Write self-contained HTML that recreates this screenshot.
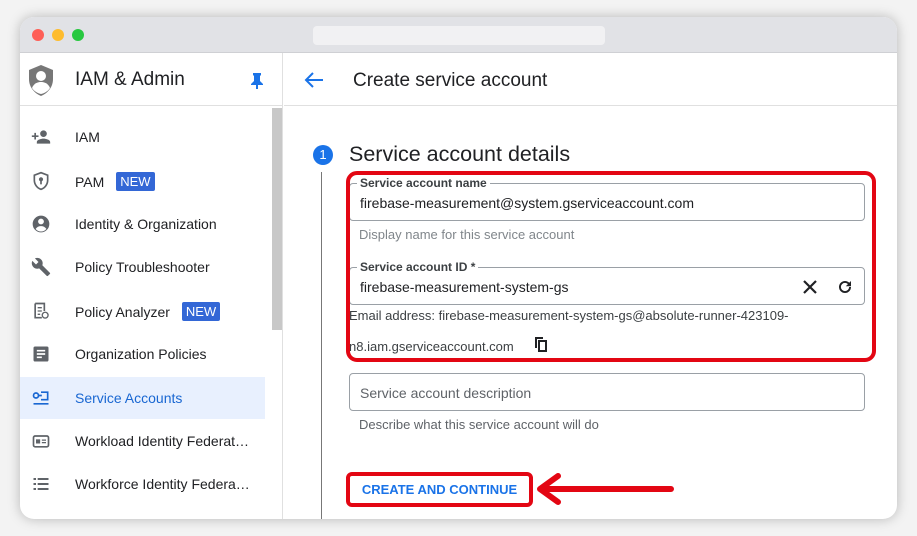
<!DOCTYPE html>
<html><head><style>
*{box-sizing:border-box;margin:0;padding:0}
body{width:917px;height:536px;background:#f3f3f3;font-family:"Liberation Sans",sans-serif;position:relative;overflow:hidden}
.win{position:absolute;left:20px;top:17px;width:877px;height:502px;background:#fff;border-radius:14px;overflow:hidden;box-shadow:0 0 12px rgba(0,0,0,.25)}
.tb{position:absolute;left:0;top:0;width:100%;height:36px;background:#e1e2e6;border-bottom:1px solid #cfd0d4}
.dot{position:absolute;top:12px;width:12px;height:12px;border-radius:50%}
.addr{position:absolute;left:293px;top:9px;width:292px;height:19px;background:#f1f1f3;border-radius:4px}
.side{position:absolute;left:0;top:36px;width:263px;height:466px;border-right:1px solid #e0e0e0}
.sh{height:53px;border-bottom:1px solid #e0e0e0;position:relative}
.sh .t{position:absolute;left:55px;top:16px;font-size:19px;color:#202124}
.it{position:absolute;left:0;width:245px;height:42px;font-size:14px;color:#202124}
.it span.l{position:absolute;left:55px;top:13px}
.it svg{position:absolute;left:11px;top:11px}
.new{display:inline-block;background:#3367d6;color:#fff;font-size:13px;padding:2px 4px;border-radius:2px;margin-left:8px;position:relative;top:-1px}
.sc{position:absolute;left:252px;top:55px;width:10px;height:222px;background:#c8c8c8}
.main{position:absolute;left:264px;top:36px;right:0;bottom:0}
.mh{height:53px;border-bottom:1px solid #e0e0e0;position:relative}
.fld{position:absolute;border:1px solid #9aa0a6;border-radius:4px;height:38px;font-size:14px;color:#202124}
.fld .v{position:absolute;left:10px;top:11px}
.lab{position:absolute;left:7px;top:-8px;background:#fff;padding:0 3px;font-size:12px;font-weight:bold;color:#3c4043}
.hint{position:absolute;font-size:13px;color:#5f6368}
</style></head><body>
<div class="win">
 <div class="tb">
  <div class="dot" style="left:12px;background:#fe5f57"></div>
  <div class="dot" style="left:32px;background:#febc2e"></div>
  <div class="dot" style="left:52px;background:#28c840"></div>
  <div class="addr"></div>
 </div>
 <div class="side">
  <div class="sh">
   <svg style="position:absolute;left:7px;top:11px" width="28" height="33" viewBox="0 0 28 33"><path d="M14 1L2 6v9c0 8 5 14 12 17 7-3 12-9 12-17V6z" fill="#777"/><circle cx="14" cy="12" r="5" fill="#fff"/><path d="M5 24c2-5 6-6 9-6s7 1 9 6c-2 3-5 5-9 6-4-1-7-3-9-6z" fill="#fff"/></svg>
   <div class="t">IAM &amp; Admin</div>
   <svg style="position:absolute;left:230px;top:20px" width="14" height="16" viewBox="0 0 14 16"><path d="M3 0h8v2l-1 1v5l3 3v1H8v4H6v-4H1v-1l3-3V3L3 2z" fill="#1a73e8"/></svg>
  </div>
  <div class="sc"></div>
  <div class="it" style="top:63px"><svg width="20" height="20" viewBox="0 0 24 24"><path d="M15 12c2.2 0 4-1.8 4-4s-1.8-4-4-4-4 1.8-4 4 1.8 4 4 4zm-9-2V7H4v3H1v2h3v3h2v-3h3v-2H6zm9 4c-2.7 0-8 1.3-8 4v2h16v-2c0-2.7-5.3-4-8-4z" fill="#5f6368"/></svg><span class="l">IAM</span></div>
  <div class="it" style="top:107px"><svg width="20" height="20" viewBox="0 0 24 24"><path d="M12 2L4 5v6c0 5 3.4 9.7 8 11 4.6-1.3 8-6 8-11V5z" fill="none" stroke="#5f6368" stroke-width="2"/><circle cx="12" cy="10" r="2.5" fill="#5f6368"/><rect x="11" y="11" width="2" height="5" fill="#5f6368"/></svg><span class="l">PAM <span class="new">NEW</span></span></div>
  <div class="it" style="top:150px"><svg width="20" height="20" viewBox="0 0 24 24"><circle cx="12" cy="12" r="10" fill="#5f6368"/><circle cx="12" cy="9" r="3.5" fill="#fff"/><path d="M5.5 18c1.5-2.5 4-3.5 6.5-3.5s5 1 6.5 3.5c-1.6 1.8-4 3-6.5 3s-4.9-1.2-6.5-3z" fill="#fff"/></svg><span class="l">Identity &amp; Organization</span></div>
  <div class="it" style="top:193px"><svg width="20" height="20" viewBox="0 0 24 24"><path d="M22.7 19l-9.1-9.1c.9-2.3.4-5-1.5-6.9-2-2-5-2.4-7.4-1.3L9 6 6 9 1.6 4.7C.4 7.1.9 10.1 2.9 12.1c1.9 1.9 4.6 2.4 6.9 1.5l9.1 9.1c.4.4 1 .4 1.4 0l2.3-2.3c.5-.4.5-1.1.1-1.4z" fill="#5f6368"/></svg><span class="l">Policy Troubleshooter</span></div>
  <div class="it" style="top:237px"><svg width="20" height="20" viewBox="0 0 24 24"><path d="M5 3h11v9M5 3v17h8" fill="none" stroke="#5f6368" stroke-width="2"/><path d="M8 8h5M8 12h5M8 16h3" stroke="#5f6368" stroke-width="1.6"/><circle cx="17" cy="17" r="3.5" fill="none" stroke="#5f6368" stroke-width="1.6"/></svg><span class="l">Policy Analyzer <span class="new">NEW</span></span></div>
  <div class="it" style="top:280px"><svg width="20" height="20" viewBox="0 0 24 24"><rect x="3" y="3" width="18" height="18" rx="2" fill="#5f6368"/><path d="M7 8h10M7 12h10M7 16h6" stroke="#fff" stroke-width="2"/></svg><span class="l">Organization Policies</span></div>
  <div class="it" style="top:324px;background:#e8f0fe;color:#1967d2"><svg width="20" height="20" viewBox="0 0 24 24"><circle cx="6" cy="9" r="3" fill="none" stroke="#1967d2" stroke-width="2"/><path d="M9 9h4M12 5h8v9h-8M3 19h18" stroke="#1967d2" stroke-width="2" fill="none"/></svg><span class="l">Service Accounts</span></div>
  <div class="it" style="top:367px"><svg width="20" height="20" viewBox="0 0 24 24"><rect x="3" y="6" width="18" height="13" rx="2" fill="none" stroke="#5f6368" stroke-width="2"/><rect x="6" y="10" width="5" height="5" fill="#5f6368"/><path d="M13 11h5M13 14h5" stroke="#5f6368" stroke-width="1.5"/></svg><span class="l">Workload Identity Federat…</span></div>
  <div class="it" style="top:410px"><svg width="20" height="20" viewBox="0 0 24 24"><path d="M3 6h3M3 12h3M3 18h3M8 6h13M8 12h13M8 18h13" stroke="#5f6368" stroke-width="2.5"/></svg><span class="l">Workforce Identity Federa…</span></div>
 </div>
 <div class="main">
  <div class="mh">
   <svg style="position:absolute;left:20px;top:18px" width="20" height="18" viewBox="0 0 20 18"><path d="M19 9H3M9 2L2 9l7 7" fill="none" stroke="#1a73e8" stroke-width="2"/></svg>
   <div style="position:absolute;left:69px;top:17px;font-size:19px;color:#202124">Create service account</div>
  </div>
  <div style="position:absolute;left:29px;top:92px;width:20px;height:20px;border-radius:50%;background:#1a73e8;color:#fff;font-size:13px;text-align:center;line-height:20px">1</div>
  <div style="position:absolute;left:65px;top:89px;font-size:21.5px;color:#202124">Service account details</div>
  <div style="position:absolute;left:37px;top:119px;width:1px;height:350px;background:#777"></div>
  <div class="fld" style="left:65px;top:130px;width:516px"><div class="lab">Service account name</div><div class="v">firebase-measurement@system.gserviceaccount.com</div></div>
  <div class="hint" style="left:75px;top:174px;color:#80868b">Display name for this service account</div>
  <div class="fld" style="left:65px;top:214px;width:516px"><div class="lab">Service account ID *</div><div class="v">firebase-measurement-system-gs</div>
   <svg style="position:absolute;left:452px;top:11px" width="16" height="16" viewBox="0 0 16 16"><path d="M2 2l12 12M14 2L2 14" stroke="#202124" stroke-width="2.2"/></svg>
   <svg style="position:absolute;left:486px;top:10px" width="18" height="18" viewBox="0 0 24 24"><path d="M17.65 6.35A7.96 7.96 0 0012 4a8 8 0 108 8h-2.5A5.5 5.5 0 1112 6.5c1.5 0 2.9.6 3.9 1.6L13 11h7V4z" fill="#202124"/></svg>
  </div>
  <div class="hint" style="left:65px;top:255px;color:#3c4043">Email address: firebase-measurement-system-gs@absolute-runner-423109-</div>
  <div class="hint" style="left:65px;top:286px;color:#3c4043">n8.iam.gserviceaccount.com</div>
  <svg style="position:absolute;left:250px;top:283px" width="14" height="16" viewBox="0 0 14 16"><path d="M1 1h8v2H3v9H1z" fill="#202124"/><rect x="5" y="5" width="7" height="10" fill="none" stroke="#202124" stroke-width="2"/></svg>
  <div style="position:absolute;left:62px;top:118px;width:530px;height:191px;border:4px solid #e30613;border-radius:11px"></div>
  <div class="fld" style="left:65px;top:320px;width:516px"><div class="v" style="color:#5f6368">Service account description</div></div>
  <div class="hint" style="left:75px;top:364px">Describe what this service account will do</div>
  <div style="position:absolute;left:62px;top:419px;width:187px;height:35px;border:4px solid #e30613;border-radius:6px;color:#1a73e8;font-weight:bold;font-size:13px;text-align:center;line-height:27px">CREATE AND CONTINUE</div>
  <svg style="position:absolute;left:248px;top:419px" width="145" height="34" viewBox="0 0 145 34"><path d="M139 17H10M26 4L8 17l18 13" fill="none" stroke="#e30613" stroke-width="6" stroke-linecap="round" stroke-linejoin="round"/></svg>
 </div>
</div>
</body></html>
